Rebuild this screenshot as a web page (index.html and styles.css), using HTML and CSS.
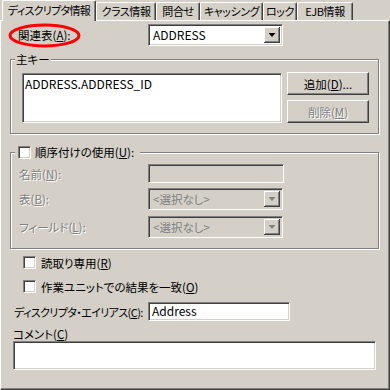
FILE: index.html
```html
<!DOCTYPE html>
<html lang="ja">
<head>
    <meta charset="UTF-8">
    <meta name="viewport" content="width=device-width, initial-scale=1.0">
    <title>ディスクリプタ情報</title>
    <link rel="stylesheet" href="styles.css">
</head>
<body>
    <div class="tabs">
        <div class="tab tab-active tab-descriptor">ディスクリプタ情報</div>
        <div class="tab tab-class">クラス情報</div>
        <div class="tab tab-query">問合せ</div>
        <div class="tab tab-cache">キャッシング</div>
        <div class="tab tab-lock">ロック</div>
        <div class="tab tab-ejb">EJB情報</div>
    </div>

    <div class="panel">
        <div class="row row-table">
            <span class="row-label">関連表(<u>A</u>):</span>
            <div class="combo">
                <span class="combo-text">ADDRESS</span>
                <span class="combo-button"><span class="arrow"></span></span>
            </div>
            <svg class="highlight" width="74" height="26" viewBox="0 0 74 26">
                <ellipse cx="36.5" cy="12.5" rx="34.5" ry="10.5" fill="none" stroke="#ff0000" stroke-width="3"/>
            </svg>
        </div>

        <fieldset class="group group-keys">
            <legend class="group-title">主キー</legend>
            <div class="keys-body">
                <div class="listbox">ADDRESS.ADDRESS_ID</div>
                <div class="button-column">
                    <button class="button">追加(<u>D</u>)...</button>
                    <button class="button" disabled>削除(<u>M</u>)</button>
                </div>
            </div>
        </fieldset>

        <fieldset class="group group-order">
            <legend class="group-title group-title-check">
                <span class="check"></span><span>順序付けの使用(<u>U</u>):</span>
            </legend>
            <div class="order-body">
                <div class="order-row">
                    <span class="order-label disabled">名前(<u>N</u>):</span>
                    <div class="field field-disabled"></div>
                </div>
                <div class="order-row order-row-table">
                    <span class="order-label disabled">表(<u>B</u>):</span>
                    <div class="combo combo-disabled">
                        <span class="combo-text">&lt;選択なし&gt;</span>
                        <span class="combo-button"><span class="arrow"></span></span>
                    </div>
                </div>
                <div class="order-row order-row-field">
                    <span class="order-label disabled">フィールド(<u>L</u>):</span>
                    <div class="combo combo-disabled">
                        <span class="combo-text">&lt;選択なし&gt;</span>
                        <span class="combo-button"><span class="arrow"></span></span>
                    </div>
                </div>
            </div>
        </fieldset>

        <div class="check-row check-row-first">
            <span class="check"></span><span>読取り専用(<u>R</u>)</span>
        </div>
        <div class="check-row">
            <span class="check"></span><span>作業ユニットでの結果を一致(<u>O</u>)</span>
        </div>

        <div class="row row-alias">
            <span class="row-label alias-label">ディスクリプタ・エイリアス(<u>C</u>):</span>
            <div class="field field-alias">Address</div>
        </div>

        <div class="comment-label">コメント(<u>C</u>)</div>
        <div class="comment-box"></div>
    </div>
</body>
</html>
```

FILE: styles.css
```css
* {
    margin: 0;
    padding: 0;
    box-sizing: border-box;
}

body {
    width: 390px;
    height: 390px;
    overflow: hidden;
    background-color: #d4d0c8;
    color: #000000;
    font-family: "Noto Sans CJK JP", sans-serif;
    font-size: 11.5px;
    line-height: 14px;
    font-feature-settings: "palt";
}

u {
    text-decoration: underline;
    text-underline-offset: 1px;
}

/* tabs */
.tabs {
    display: flex;
    align-items: flex-end;
    height: 20px;
    padding-left: 2px;
}

.tab {
    height: 18px;
    border: 1px solid #ffffff;
    border-right-color: #404040;
    border-bottom: none;
    border-radius: 2px 2px 0 0;
    box-shadow: inset -1px 0 0 #808080;
    text-align: center;
    font-size: 11px;
    line-height: 16px;
    letter-spacing: -0.4px;
    white-space: nowrap;
}

.tab-active {
    position: relative;
    z-index: 1;
    height: 21px;
    margin-bottom: -1px;
    background-color: #d4d0c8;
    line-height: 18px;
}

.tab-descriptor { width: 94px; letter-spacing: -0.7px; }
.tab-class { width: 60px; }
.tab-query { width: 44px; }
.tab-cache { width: 63px; }
.tab-lock { width: 34px; }
.tab-ejb { width: 56px; }

/* page panel */
.panel {
    height: 370px;
    border-top: 1px solid #ffffff;
    border-left: 1px solid #ffffff;
    border-right: 1px solid #404040;
    border-bottom: 1px solid #404040;
    box-shadow: inset -1px -1px 0 #808080;
}

.row {
    display: flex;
    align-items: center;
}

.row-table {
    position: relative;
    margin-top: 3px;
}

.row-label {
    width: 147px;
    padding-left: 17px;
    white-space: nowrap;
}

.highlight {
    position: absolute;
    left: 7px;
    top: -1px;
}

/* sunken controls */
.combo,
.field,
.listbox,
.comment-box,
.check {
    background-color: #ffffff;
    border: 1px solid;
    border-color: #808080 #ffffff #ffffff #808080;
    box-shadow: inset 1px 1px 0 #404040, inset -1px -1px 0 #d4d0c8;
}

.combo {
    display: flex;
    width: 135px;
    height: 22px;
    padding: 2px;
}

.combo-text {
    flex: 1;
    padding-left: 2px;
    font-size: 12px;
    line-height: 16px;
    white-space: nowrap;
}

.combo-button {
    display: flex;
    align-items: center;
    justify-content: center;
    width: 16px;
    height: 16px;
    background-color: #d4d0c8;
    box-shadow: inset -1px -1px 0 #404040, inset 1px 1px 0 #ffffff, inset -2px -2px 0 #808080;
}

.arrow {
    width: 7px;
    height: 4px;
    background-color: #000000;
    clip-path: polygon(0 0, 100% 0, 50% 100%);
}

.combo-disabled {
    background-color: #d4d0c8;
    color: #808080;
}

.combo-disabled .combo-text {
    font-size: 11.5px;
}

.combo-disabled .arrow {
    background-color: #808080;
}

.field {
    height: 19px;
    padding: 0 3px;
    font-size: 12px;
    line-height: 16px;
}

.field-disabled {
    width: 136px;
    background-color: #d4d0c8;
}

.check {
    display: inline-block;
    width: 13px;
    height: 13px;
    flex-shrink: 0;
}

.disabled {
    color: #808080;
    text-shadow: 1px 1px 0 #ffffff;
}

/* group boxes */
.group {
    width: 369px;
    margin-left: 9px;
    border: 1px solid #808080;
    box-shadow: inset 1px 1px 0 #ffffff, 1px 1px 0 #ffffff;
}

.group-title {
    margin-left: 4px;
    padding: 0 1px;
    line-height: 13px;
    height: 13px;
    background-color: #d4d0c8;
}

.group-keys {
    margin-top: 7px;
}

.keys-body {
    display: flex;
    gap: 5px;
    padding: 6px 0 10px 11px;
}

.listbox {
    width: 260px;
    height: 50px;
    margin-top: 1px;
    padding: 3px 2px;
    font-size: 12px;
    line-height: 14px;
}

.button-column {
    display: flex;
    flex-direction: column;
    gap: 5px;
}

.button {
    width: 82px;
    height: 23px;
    background-color: #d4d0c8;
    border: 1px solid;
    border-color: #ffffff #404040 #404040 #ffffff;
    box-shadow: inset -1px -1px 0 #808080;
    font: inherit;
    color: #000000;
}

.button:disabled {
    color: #808080;
    text-shadow: 1px 1px 0 #ffffff;
}

.group-order {
    margin-top: 12px;
}

.group-title-check {
    display: flex;
    align-items: center;
    gap: 4px;
    padding: 0 6px 0 3px;
}

.order-body {
    padding: 5px 0 10px 8px;
}

.order-row {
    display: flex;
    align-items: center;
}

.order-row-table {
    margin-top: 5px;
}

.order-row-field {
    margin-top: 6px;
}

.order-label {
    width: 129px;
    white-space: nowrap;
}

/* options */
.check-row {
    display: flex;
    align-items: center;
    gap: 5px;
    height: 13px;
    margin-top: 11px;
    padding-left: 22px;
    white-space: nowrap;
}

.check-row-first {
    margin-top: 7px;
}

.row-alias {
    margin-top: 9px;
}

.alias-label {
    width: 147px;
    padding-left: 13px;
    font-size: 11px;
    letter-spacing: -0.6px;
}

.field-alias {
    width: 142px;
}

.comment-label {
    height: 13px;
    margin-top: 7px;
    padding-left: 12px;
    line-height: 13px;
}

.comment-box {
    width: 363px;
    height: 29px;
    margin-left: 12px;
}
```
